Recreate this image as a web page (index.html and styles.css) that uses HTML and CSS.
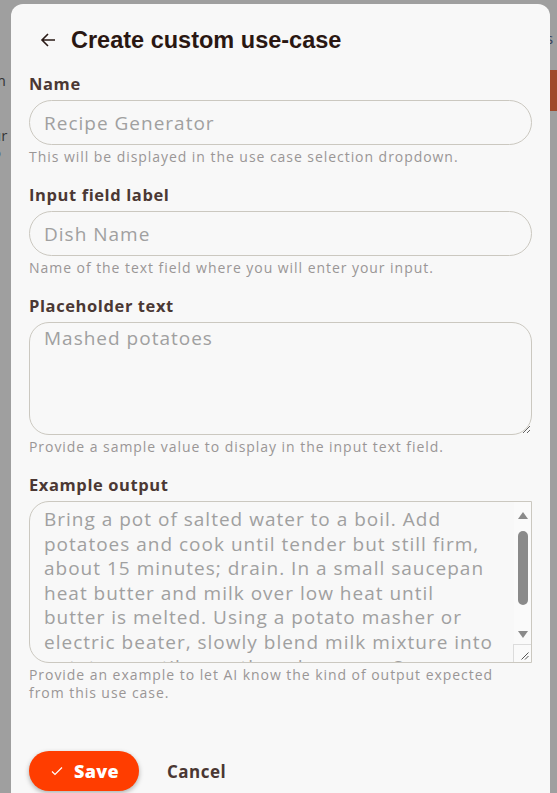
FILE: index.html
```html
<!DOCTYPE html>
<html lang="en">
<head>
	<meta charset="UTF-8">
	<title>Create custom use-case</title>
	<link rel="stylesheet" href="styles.css">
</head>
<body>
	<div id="page">
		<div class="page-left">
			<p class="frag frag-m">m</p>
			<p class="frag">a<br>ur<br>o</p>
		</div>
		<div class="page-right">
			<p class="frag frag-s">s</p>
			<div class="page-btn"></div>
		</div>
	</div>
	<div id="overlay"></div>

	<div id="modal">
		<h1 class="title">
			<svg class="back" width="16" height="16" viewBox="0 0 16 16">
				<path d="M15 8H2M8 2L2 8l6 6" fill="none" stroke="#2a1a16" stroke-width="1.6"/>
			</svg>
			Create custom use-case
		</h1>

		<div class="field">
			<label>Name</label>
			<input type="text" class="pill" placeholder="Recipe Generator">
			<p class="hint">This will be displayed in the use case selection dropdown.</p>
		</div>

		<div class="field">
			<label>Input field label</label>
			<input type="text" class="pill" placeholder="Dish Name">
			<p class="hint">Name of the text field where you will enter your input.</p>
		</div>

		<div class="field">
			<label>Placeholder text</label>
			<textarea class="box box-small" placeholder="Mashed potatoes"></textarea>
			<p class="hint">Provide a sample value to display in the input text field.</p>
		</div>

		<div class="field">
			<label>Example output</label>
			<div class="scroll-wrap">
				<textarea class="box box-big">Bring a pot of salted water to a boil. Add
potatoes and cook until tender but still firm,
about 15 minutes; drain. In a small saucepan
heat butter and milk over low heat until
butter is melted. Using a potato masher or
electric beater, slowly blend milk mixture into
potatoes until smooth and creamy. Season
with salt and pepper to taste.</textarea>
				<div class="scrollbar">
					<span class="arrow arrow-up"></span>
					<span class="thumb"></span>
					<span class="arrow arrow-down"></span>
				</div>
				<div class="resizer">
					<svg width="8" height="8" viewBox="0 0 8 8">
						<path d="M7.5 0.5L0.5 7.5M7.5 4L4 7.5" fill="none" stroke="#555" stroke-width="1"/>
					</svg>
				</div>
			</div>
			<p class="hint">Provide an example to let AI know the kind of output expected from this use case.</p>
		</div>

		<div class="actions">
			<button class="save">
				<svg width="12" height="10" viewBox="0 0 12 10">
					<path d="M1 5.5l3 3L11 1.5" fill="none" stroke="#fff" stroke-width="1.2"/>
				</svg>
				Save
			</button>
			<button class="cancel">Cancel</button>
		</div>
	</div>
</body>
</html>
```
FILE: styles.css
```css
* {
	margin: 0;
	padding: 0;
	box-sizing: border-box;
}
body {
	font-family: "Open Sans", Lato, sans-serif;
	background: #fff;
	height: 793px;
	overflow: hidden;
}
#page {
	display: flex;
	justify-content: space-between;
	height: 100%;
}
.page-left {
	padding-top: 72px;
	margin-left: -8px;
}
.frag {
	font-size: 15px;
	line-height: 17px;
	color: #111;
}
.frag-m {
	margin-bottom: 21px;
}
.page-right {
	width: 10px;
	padding-top: 30px;
}
.frag-s {
	color: #0d2a66;
	margin-left: -1px;
	height: 40px;
}
.page-btn {
	width: 40px;
	height: 41px;
	background: #ff4200;
}
#overlay {
	position: fixed;
	inset: 0;
	background: rgba(80, 80, 80, 0.55);
}
#modal {
	position: absolute;
	left: 11px;
	top: 4px;
	width: 539px;
	height: 789px;
	background: #f8f8f8;
	border-radius: 12px 12px 0 0;
	padding: 24px 18px 0 18px;
	color: #4a3733;
}
.title {
	display: flex;
	align-items: center;
	gap: 15px;
	padding-left: 11px;
	font-family: "Liberation Sans", Arial, sans-serif;
	font-size: 23.5px;
	font-weight: bold;
	color: #2a1712;
	height: 24px;
	margin-bottom: 22px;
}
.field {
	margin-bottom: 19px;
}
.field label {
	display: block;
	font-size: 16.5px;
	font-weight: bold;
	letter-spacing: 0.6px;
	line-height: 20px;
	margin-bottom: 6px;
	color: #4b3834;
}
.pill, .box {
	display: block;
	width: 503px;
	border: 1px solid #cbc8c0;
	background: #f8f8f8;
	font-family: "Open Sans", Lato, sans-serif;
	font-size: 19px;
	letter-spacing: 1px;
	color: #a0a0a0;
	outline: 0;
}
.pill {
	height: 45px;
	border-radius: 23px;
	padding: 0 14px;
}
.box {
	border-radius: 20px;
	padding: 5px 14px;
	line-height: 24.6px;
}
.box-small {
	height: 113px;
	padding-top: 3px;
}
.scroll-wrap {
	position: relative;
	width: 503px;
}
.box-big {
	height: 162px;
	border-radius: 20px 0 0 20px;
	padding-right: 18px;
	overflow: hidden;
	resize: none;
}
.scrollbar {
	position: absolute;
	right: 1px;
	top: 1px;
	bottom: 19px;
	width: 17px;
	background: #fafafa;
	display: flex;
	flex-direction: column;
	align-items: center;
	padding: 10px 0 6px;
}
.arrow {
	width: 0;
	height: 0;
	border-left: 5px solid transparent;
	border-right: 5px solid transparent;
}
.arrow-up {
	border-bottom: 7px solid #8a8a8a;
}
.arrow-down {
	border-top: 7px solid #8a8a8a;
	margin-top: auto;
}
.thumb {
	width: 10px;
	height: 74px;
	margin-top: 12px;
	border-radius: 5px;
	background: #8a8a8a;
}
.resizer {
	position: absolute;
	right: 1px;
	bottom: 1px;
	width: 18px;
	height: 18px;
	border-left: 1px solid #dcdcdc;
	border-top: 1px solid #dcdcdc;
	background: #fafafa;
	display: flex;
	align-items: flex-end;
	justify-content: flex-end;
	padding: 0 2px 2px 0;
}
.resizer svg {
	display: block;
}
::placeholder {
	color: #a0a0a0;
}
.hint {
	max-width: 490px;
	font-size: 14px;
	letter-spacing: 0.95px;
	line-height: 18px;
	color: #9a9696;
	margin-top: 3px;
}
.actions {
	display: flex;
	align-items: center;
	gap: 28px;
	margin-top: 49px;
}
.save {
	display: flex;
	align-items: center;
	gap: 11px;
	height: 40px;
	width: 110px;
	padding-left: 22px;
	border: 0;
	border-radius: 20px;
	background: #ff3d00;
	color: #fff;
	font-family: "Open Sans", sans-serif;
	font-size: 18px;
	font-weight: 800;
	letter-spacing: 0.3px;
	box-shadow: 0 2px 5px rgba(0, 0, 0, 0.3);
}
.cancel {
	border: 0;
	background: none;
	font-family: "Open Sans", sans-serif;
	font-size: 17px;
	font-weight: bold;
	letter-spacing: 0.5px;
	color: #4a3733;
}
```
